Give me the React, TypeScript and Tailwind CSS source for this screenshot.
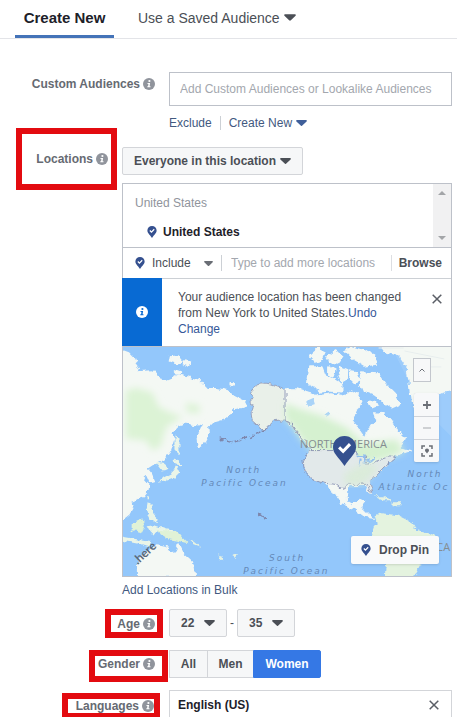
import React from 'react';

const Caret: React.FC<{ className?: string }> = ({ className = 'w-[11px] h-[6px] text-[#4b4f56]' }) => (
  <svg viewBox="0 0 11 6" className={className} fill="currentColor" aria-hidden="true">
    <path d="M1 0h9c.8 0 1.200 .8.6 1.400L6.300 5.600a1.100 1.100 0 0 1-1.600 0L.4 1.400C-.2.8.2 0 1 0z" />
  </svg>
);

const InfoIcon: React.FC<{ className?: string; dot?: string }> = ({ className = 'w-3 h-3 text-[#90949c]', dot = '#fff' }) => (
  <svg viewBox="0 0 12 12" className={`shrink-0 ${className}`} aria-hidden="true">
    <circle cx="6" cy="6" r="6" fill="currentColor" />
    <circle cx="6.400" cy="3" r="1.100" fill={dot} />
    <path d="M4.500 4.900h2.600L6.600 8.300h.9v1H4.300v-1h.8l.3-2.400h-.9z" fill={dot} />
  </svg>
);

const PinIcon: React.FC<{ className?: string }> = ({ className = 'w-[10px] h-3' }) => (
  <svg viewBox="0 0 20 26" className={`shrink-0 ${className}`} aria-hidden="true">
    <path d="M10 0C4.300 0 0 4.300 0 9.800 0 15.500 4.500 18 10 26c5.500-8 10-10.500 10-16.200C20 4.300 15.700 0 10 0z" fill="#35508f" />
    <path d="M5.300 9.800l3.500 3.500 6-6.300" fill="none" stroke="#fff" strokeWidth="2.600" />
  </svg>
);

const CloseIcon = () => (
  <svg viewBox="0 0 10 10" className="w-[10px] h-[10px]" fill="none" stroke="#5a5e66" strokeWidth="1.500" aria-hidden="true">
    <path d="M.7.7l8.600 8.600M9.300.7L.7 9.300" />
  </svg>
);

interface FieldLabelProps {
  text: string;
  htmlFor?: string;
  id?: string;
}

const FieldLabel: React.FC<FieldLabelProps> = ({ text, htmlFor, id }) => (
  <label htmlFor={htmlFor} id={id} className="flex items-center gap-[3px] leading-4 font-bold text-[#666a72]">
    {text} <InfoIcon />
  </label>
);

interface SelectProps {
  id: string;
  label?: string;
  options: string[];
  className: string;
}

const SelectBox: React.FC<SelectProps> = ({ id, label, options, className }) => (
  <div className={`relative h-7 ${className}`}>
    <select
      id={id}
      aria-label={label}
      className="w-full h-full appearance-none border border-[#d3d5d9] rounded-xs bg-[#f6f7f8] pl-[11px] font-bold text-[#4b4f56]"
    >
      {options.map(o => <option key={o}>{o}</option>)}
    </select>
    <Caret className="absolute right-3 top-[11px] w-[11px] h-[6px] text-[#4b4f56] pointer-events-none" />
  </div>
);

const WorldMap = () => (
  <svg viewBox="0 0 330 230" preserveAspectRatio="xMidYMid slice" className="absolute inset-0 w-full h-full" aria-hidden="true">
    <defs>
      <filter id="coast" x="-5%" y="-5%" width="110%" height="110%">
        <feTurbulence type="fractalNoise" baseFrequency="0.16" numOctaves="3" seed="4" />
        <feDisplacementMap in="SourceGraphic" scale="6" xChannelSelector="R" yChannelSelector="G" />
      </filter>
      <filter id="soft"><feGaussianBlur stdDeviation="4" /></filter>
      <clipPath id="america">
        <path d="M163 42L176 42 190 46 196 49 210 47 223 49 230 44 235 47 240 54 236 62 231 74 238 84 243 91 246 82 255 74 253 66 263 67 270 74 276 84 285 92 278 101 290 104 273 109 263 114 265 119 255 126 248 136 251 146 246 145 244 139 228 139 225 146 226 154 231 159 238 152 243 154 240 161 248 169 253 172 243 171 231 162 220 157 213 147 200 134 190 126 188 117 186 109 188 102 178 91 170 79 163 72z" />
      </clipPath>
    </defs>
    <rect width="330" height="230" fill="#93c7fb" />
    <path d="M150 0h120l30 60 30 30V0z" fill="#9dccfb" />
    <g filter="url(#coast)">
      <g fill="#f4f8f4" stroke="#f4f8f4" strokeWidth="1.500" strokeLinejoin="round">
        {/* Asia and its islands */}
        <path d="M-5 2L6 6 12 12 15 20 13 25 30 24 36 30 40 36 50 32 53 28 65 30 78 34 85 42 95 42 105 44 112 50 122 55 124 59 117 61 108 62 108 68 102 72 88 76 85 80 86 88 82 96 76 100 75 92 80 80 82 74 76 78 62 76 56 78 48 86 52 92 48 104 40 114 30 118 24 122 28 127 31 134 27 135 24 128 20 131 26 138 25 144 21 149 13 154 8 156 10 161 6 168 1 172-5 172z" />
        <path d="M48 10l8-1 4 5-5 3-8-2zM62 14l6 1-2 4-5-2zM52 23l6 2-3 2zM108 35l4 0 0 3-4 0z" />
        <path d="M15 231L15 221 18 211 30 202 36 199 46 201 48 207 53 206 55 197 60 207 70 216 72 231z" />
        {/* Arctic archipelago and Greenland */}
        <path d="M188 8l8-7 8 4-3 7-8 2zM205 10l9-6 7 6-5 7-8-2zM223 4l8-4 21 7 3 10-13 2-10-6zM187 20l12 0 3 8 8 3 10 6 0 8-12-1-9 1-6-5-8-4zM206 20l7 3-2 6-5-2zM219 20l7 3-1 9-5 3-3-8zM229 24l6 1 2 8-5 3-4-4zM240 26l16 1 7 10 10 10 6 10-9 4-10-7-8-6-10-4-4-10z" />
        <path d="M247 55l6-1 2 4-5 2z" />
        <path d="M258-3L263 4 278 9 286 21 288 37 290 54 292 61 300 56 316 47 335 42 335-5z" />
      </g>
      <g fill="#eaf5e8">
        <path d="M53 88l4 5 0 15-4-4zM52 112l6 2 1 5-5-1zM54 119l3 7-6 6-8 3-7 1 5-5 8-4zM34 116l9 2 2 5-5 1zM25 156l4 1 0 8 5 6-1 5-6-5-3-9zM24 150l2 0 0 3-2 0zM-3 190l12 2 20 4-1 4-15-3-16-3zM24 180l8-1 12 4 8 1-2 4-14-3-4 5-5-5z" />
      </g>
      <path d="M140 36L148 37 160 41 164 42 164 73 153 74 143 84 138 81 130 74 129 66 131 61 128 56 132 51 128 46 133 39z" fill="#e9f0e9" stroke="#8d94b2" strokeWidth=".8" />
      <path d="M163 42L176 42 190 46 196 49 210 47 223 49 230 44 235 47 240 54 236 62 231 74 238 84 243 91 246 82 255 74 253 66 263 67 270 74 276 84 285 92 278 101 290 104 273 109 263 114 265 119 255 126 248 136 251 146 246 145 244 139 228 139 225 146 226 154 231 159 238 152 243 154 240 161 248 169 253 172 243 171 231 162 220 157 213 147 200 134 190 126 188 117 186 109 188 102 178 91 170 79 163 72z" fill="#f4f8f4" stroke="#f4f8f4" />
      <path d="M184 55l7-3 2 5-6 2zM201 68l6-3 3 2-6 3z" fill="#a9d3f8" />
      <path d="M253 169L260 167 276 169 290 176 296 184 313 189 318 196 308 208 300 217 291 232 263 232 265 214 253 194 251 187 255 176z" fill="#e4f3df" />
      <path d="M36 184l10 0 10 3 9 10-8-2-11-2-8-5zM10 177l10-4 2 6-4 8-8-2z" fill="#e0f2d6" />
      <path d="M253 150l8 0 9 5-6 0zM270 156l9 0 0 3-9 0zM66 193l8 3 6 5-8-3zM96 207l3 3 2 6-3-2zM110 210l7-2-4 4z" fill="#e6f2e2" />
    </g>
    <g filter="url(#soft)">
      <path d="M3 44L13 41 30 46 36 60 48 66 60 70 44 80 38 100 30 104 23 94 3 92zM64 56l14 3-2 8-12-2z" fill="#dcf3d5" />
      <g clipPath="url(#america)">
        <path d="M160 55l20 8 20 6 25 12 18 16 32-4 8 12-20 8-24 4-36-8-20-8-20-24z" fill="#d5f1d0" />
      </g>
    </g>
    <g filter="url(#coast)" fill="none" stroke="#7d86ac" strokeWidth=".8">
      <path d="M188 104l42 0 8 5 8 2-2 8 9-3 16-7 4 3-10 8-7 7-8 9 3 9-4-1-2-6-18 0-6 5-6-5-12-1-12-4-8-8-2-11z" fill="#e2e9ea" />
      <path d="M163 42v31l6 4 5 8 8 9 4 8" />
      <path d="M145 82l-19 9-16 5-14-4" strokeDasharray="6 1.500" strokeWidth="1.500" />
      <path d="M136 168l3 1M140 169l4 3M141 171l4 2" strokeWidth="1.500" />
      <path d="M236 109l7 1 0 7M239 112l-1 7M246 115l6-2" stroke="#8fbdf0" strokeWidth="2" />
    </g>
    <path d="M222 128l20-12 16 4-16 18-18 1z" fill="#d9ecd6" filter="url(#soft)" opacity=".8" />
    <path d="M257 1l25 0M283 4l40 8M300 20l20 0" stroke="#e8eeee" fill="none" />
    <g fill="#6589b8" fontFamily="'DejaVu Sans', sans-serif" fontStyle="italic" fontSize="9" letterSpacing="2">
      <text x="104" y="127">North</text>
      <text x="79" y="140">Pacific Ocean</text>
      <text x="147" y="215">South</text>
      <text x="121" y="228">Pacific Ocean</text>
      <text x="286" y="131">North</text>
      <text x="257" y="144">Atlantic Oc</text>
    </g>
    <g fill="#858d91" fontFamily="'Open Sans', sans-serif" fontSize="11">
      <text x="178" y="101">NORTH AMERICA</text>
      <text x="315" y="205">CA</text>
    </g>
    <text transform="translate(15 219) rotate(-43)" fill="#596779" fontFamily="Lato, sans-serif" fontSize="12" fontWeight="700">.here</text>
  </svg>
);

const mapButton = 'flex items-center justify-center bg-[#f7f8f9] text-[#6b6f76]';

const LocationMap = () => (
  <div className="relative h-[231px] overflow-hidden border border-[#bdc1c9]">
    <WorldMap />
    <PinIcon className="absolute left-[210px] top-[89px] w-[23px] h-[30px]" />
    <button aria-label="Collapse map" className={`${mapButton} absolute right-[20px] top-[11px] w-[18px] h-6 border border-[#c3c7cd]`}>
      <svg viewBox="0 0 6 4" className="w-[6px] h-1" fill="none" stroke="currentColor"><path d="M.5 3.500L3 1l2.500 2.500" /></svg>
    </button>
    <div className="absolute right-3 top-[46px] w-[25px] flex flex-col gap-px bg-[#d0d3d8] rounded-xs shadow-sm overflow-hidden">
      <button aria-label="Zoom in" className={`${mapButton} h-[23px]`}>
        <svg viewBox="0 0 8 8" className="w-2 h-2" stroke="currentColor" strokeWidth="1.800"><path d="M4 0v8M0 4h8" /></svg>
      </button>
      <button aria-label="Zoom out" className={`${mapButton} h-[22px]`}>
        <svg viewBox="0 0 8 8" className="w-2 h-2" stroke="#a5a8ae" strokeWidth="1.200"><path d="M0 4h8" /></svg>
      </button>
      <button aria-label="Fit to selection" className={`${mapButton} h-[22px]`}>
        <svg viewBox="0 0 12 12" className="w-3 h-3" fill="none" stroke="currentColor" strokeWidth="1.500">
          <path d="M1 4V1h3M8 1h3v3M11 8v3H8M4 11H1V8" />
          <path d="M6 3.500c-1.300 0-2 .9-2 2 0 1 1 1.500 2 3 1-1.500 2-2 2-3 0-1.100-.7-2-2-2z" fill="currentColor" stroke="none" />
        </svg>
      </button>
    </div>
    <button className="absolute right-3 bottom-3 w-[88px] h-7 flex items-center justify-center gap-2 rounded-xs bg-[#f9fafb] shadow-sm font-bold text-[#4b4f56]">
      <PinIcon /> Drop Pin
    </button>
  </div>
);

const genders = [
  { label: 'All', width: 'w-[38px]', active: false },
  { label: 'Men', width: 'w-[46px]', active: false },
  { label: 'Women', width: 'w-[68px]', active: true }
];

const App: React.FC = () => {
  return (
    <main className="bg-white font-['Liberation_Sans',Arial,sans-serif] text-[12px] leading-4 text-[#4b4f56]">
      <nav className="flex h-[39px] border-b border-[#e3e4e8] pl-[15px]">
        <button className="w-[99px] h-[38px] border-b-3 border-[#4473b8] text-[15px] font-bold text-[#1d2129]">Create New</button>
        <button className="ml-6 h-[35px] flex items-center gap-1 text-[14px] text-[#4b4f56]">
          Use a Saved Audience <Caret className="w-3 h-[7px] text-[#4b4f56]" />
        </button>
      </nav>

      <div className="pt-[33px] pr-[5px]">
        <section className="flex">
          <div className="w-[169px] shrink-0 flex justify-end items-start pt-1 pr-[14px]">
            <FieldLabel text="Custom Audiences" htmlFor="audiences" />
          </div>
          <div className="flex-1 min-w-0">
            <input
              id="audiences"
              placeholder="Add Custom Audiences or Lookalike Audiences"
              className="block w-full h-[34px] border border-[#bdc1c9] px-[10px] placeholder:text-[#a3a7ae]"
            />
            <div className="flex items-center mt-[9px] text-[#42597f]">
              <a href="#exclude">Exclude</a>
              <span className="w-px h-[14px] mx-2 bg-[#ccd0d5]" />
              <a href="#create" className="flex items-center gap-1">Create New <Caret className="w-[11px] h-[6px] text-[#3f5f9a]" /></a>
            </div>
          </div>
        </section>

        <section className="flex items-start">
          <div className="w-[101px] h-[62px] ml-4 mr-[5px] mt-[-3px] shrink-0 flex justify-end items-start border-6 border-[#e30b10] pt-[17px] pr-[3px]">
            <FieldLabel text="Locations" htmlFor="location-type" />
          </div>
          <div className="flex-1 min-w-0 pt-4">
            <SelectBox id="location-type" options={['Everyone in this location']} className="w-[181px]" />

            <div className="mt-2 flex h-[64px] border border-b-0 border-[#bdc1c9]">
              <div className="flex-1 pl-3 pt-[11px]">
                <p className="text-[#90949c]">United States</p>
                <p className="flex items-center gap-[6px] mt-[13px] pl-3 font-bold text-[#1d2129]"><PinIcon /> United States</p>
              </div>
              <div className="w-[18px] bg-[#f1f1f2] flex flex-col items-center justify-between py-[7px] text-[#a3a5a8]">
                <svg viewBox="0 0 8 4" className="w-2 h-1" fill="currentColor"><path d="M0 4l4-4 4 4z" /></svg>
                <svg viewBox="0 0 8 4" className="w-2 h-1" fill="currentColor"><path d="M0 0l4 4 4-4z" /></svg>
              </div>
            </div>

            <div className="flex items-center h-[31px] border border-b-0 border-[#bdc1c9] pl-3">
              <PinIcon />
              <div className="relative w-[70px] ml-[7px] border-r border-[#ccd0d5]">
                <select aria-label="Include or exclude" className="w-full appearance-none">
                  <option>Include</option>
                  <option>Exclude</option>
                </select>
                <Caret className="absolute right-2 top-[6px] w-[9px] h-[5px] text-[#6a6e75] pointer-events-none" />
              </div>
              <input aria-label="Add locations" placeholder="Type to add more locations" className="flex-1 min-w-0 pl-[9px] placeholder:text-[#a3a7ae]" />
              <button className="border-l border-[#dcdee2] pl-[7px] pr-[9px] font-bold">Browse</button>
            </div>

            <div className="flex h-[68px] border-r border-[#bdc1c9]">
              <div className="w-10 shrink-0 bg-[#086ad3] flex items-center justify-center">
                <InfoIcon className="w-3 h-3 text-white" dot="#086ad3" />
              </div>
              <p className="flex-1 border-t border-[#ccd0d5] pl-4 pr-4 pt-[10px]">
                Your audience location has been changed from New York to United States.<a href="#undo" className="text-[#365899]">Undo Change</a>
              </p>
              <button aria-label="Dismiss" className="w-7 shrink-0 border-t border-[#ccd0d5] flex justify-center pt-[15px]"><CloseIcon /></button>
            </div>

            <LocationMap />
            <a href="#bulk" className="block mt-[5px] text-[#42597f]">Add Locations in Bulk</a>
          </div>
        </section>

        <section className="flex items-start mt-[11px]">
          <div className="w-[169px] shrink-0 flex justify-end pr-[6px]">
            <div className="w-[58px] h-[29px] flex justify-end items-center border-6 border-[#e30b10] pr-[2px]">
              <FieldLabel text="Age" htmlFor="age-min" />
            </div>
          </div>
          <div className="flex items-center">
            <SelectBox id="age-min" options={['22']} className="w-[58px]" />
            <span className="w-[10px] text-center">-</span>
            <SelectBox id="age-max" label="Maximum age" options={['35']} className="w-[58px]" />
          </div>
        </section>

        <section className="flex items-start mt-3">
          <div className="w-[169px] shrink-0 flex justify-end pr-px">
            <div className="w-[79px] h-8 flex justify-end items-start border-6 border-[#e30b10] pr-[7px]">
              <FieldLabel text="Gender" id="gender-label" />
            </div>
          </div>
          <div role="group" aria-labelledby="gender-label" className="flex h-7">
            {genders.map(g => (
              <button
                key={g.label}
                aria-pressed={g.active}
                className={`${g.width} border font-bold ${g.active ? 'bg-[#3578e5] border-[#3578e5] rounded-r-xs text-white' : 'bg-[#f6f7f8] border-[#d3d5d9] border-r-0'}`}
              >
                {g.label}
              </button>
            ))}
          </div>
        </section>

        <section className="flex items-start h-[27px] mt-2 overflow-hidden">
          <div className="w-[169px] shrink-0 flex justify-end pt-[3px] pr-[9px]">
            <div className="w-[98px] h-6 flex justify-end items-center border-6 border-b-4 border-[#e30b10]">
              <FieldLabel text="Languages" htmlFor="languages" />
            </div>
          </div>
          <div className="flex-1 min-w-0 flex items-center h-[34px] border border-[#d3d5d9] pr-3 pb-1">
            <input id="languages" defaultValue="English (US)" className="flex-1 min-w-0 pl-2 font-bold text-[#1d2129]" />
            <button aria-label="Remove language"><CloseIcon /></button>
          </div>
        </section>
      </div>
    </main>
  );
};

export default App;
